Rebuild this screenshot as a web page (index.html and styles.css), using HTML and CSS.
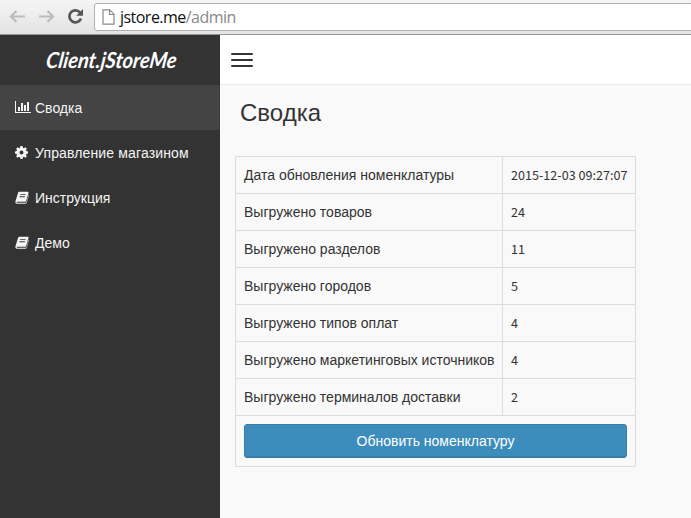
FILE: index.html
```html
<!DOCTYPE html>
<html lang="ru">
<head>
<meta charset="utf-8">
<title>Сводка</title>
<link rel="stylesheet" href="styles.css">
</head>
<body>
<svg class="defs" width="0" height="0" aria-hidden="true">
  <symbol id="book" viewBox="0 0 14 13"><path fill-rule="evenodd" d="M4.600.7h8.100c.7 0 1 .5.8 1.200l-2.400 8c-.2.6-.6.9-1.200.9H2.200c-.7 0-.8.7-.1.9h8.400c.5 0 .8-.2 1-.8l2.300-7.500.2.8-2.200 7.300c-.2.8-.8 1.200-1.500 1.200H2C.7 12.700 0 11.300.5 10.200L3.100 1.700C3.300 1 3.900.7 4.600.7zM5.300 3.200l-.3.9h5.400l.3-.9zM4.600 5.300l-.3.9h5.400l.3-.9z"/></symbol>
</svg>
<header class="browser">
  <svg class="nav-icons" width="94" height="34" viewBox="0 0 94 34" fill="none">
    <path d="M11 16.500h14M16.500 11l-5.500 5.500 5.500 5.500M39 16.500h14M47.500 11l5.500 5.500-5.500 5.500" stroke="#bcbcbc" stroke-width="2.200"/>
    <path d="M80.300 12.800A6 6 0 1 0 81 18.500" stroke="#565656" stroke-width="2.700"/>
    <path d="M83 9v6.800h-6.800z" fill="#565656"/>
  </svg>
  <div class="address">
    <svg width="13" height="16" viewBox="0 0 13 16"><path d="M1 .8h6.700L12 5.200v10H1zM7.500.8v4.700H12" fill="#fff" stroke="#8a8a8a" stroke-width="1.200"/></svg>
    <span class="url">jstore.me<span class="path">/admin</span></span>
  </div>
</header>
<div class="app">
  <aside class="sidebar">
    <a class="logo"><span>Client.jStoreMe</span></a>
    <nav>
      <a class="item active"><svg width="16" height="13" viewBox="0 0 16 13"><path d="M0 0h1v11h15v1H0zM3 6h2v4H3zM6 2h2v8H6zM9 4h2v6H9zM12 1h2v9h-2z"/></svg><span class="t1">Сводка</span></a>
      <a class="item"><svg width="13" height="13" viewBox="0 0 12 12"><path fill-rule="evenodd" d="M5 0h2l.3 1.600.9.4L9.600 1.100 11 2.500l-.9 1.300.4.900 1.500.3v2l-1.500.3-.4.900.9 1.300L9.600 10.900l-1.400-.9-.9.400L7 12H5l-.3-1.600-.9-.4-1.400.9L1 9.500l.9-1.300-.4-.9L0 7V5l1.500-.3.400-.9L1 2.500l1.400-1.400 1.400.9.900-.4zM6 4.200a1.800 1.800 0 1 0 0 3.600 1.800 1.800 0 0 0 0-3.600z"/></svg><span class="t2">Управление магазином</span></a>
      <a class="item"><svg width="14" height="13"><use href="#book"/></svg><span>Инструкция</span></a>
      <a class="item"><svg width="14" height="13"><use href="#book"/></svg><span>Демо</span></a>
    </nav>
  </aside>
  <main>
    <div class="topbar"><div class="burger"><i></i><i></i><i></i></div></div>
    <h1>Сводка</h1>
    <table>
      <tr><td>Дата обновления номенклатуры</td><td class="num">2015-12-03 09:27:07</td></tr>
      <tr><td>Выгружено товаров</td><td class="num">24</td></tr>
      <tr><td>Выгружено разделов</td><td class="num">11</td></tr>
      <tr><td>Выгружено городов</td><td class="num">5</td></tr>
      <tr><td>Выгружено типов оплат</td><td class="num">4</td></tr>
      <tr><td>Выгружено маркетинговых источников</td><td class="num">4</td></tr>
      <tr><td>Выгружено терминалов доставки</td><td class="num">2</td></tr>
      <tr><td colspan="2" class="action"><button>Обновить номенклатуру</button></td></tr>
    </table>
  </main>
</div>
</body>
</html>
```
FILE: styles.css
```css
* { box-sizing: border-box; }
body { margin: 0; height: 518px; overflow: hidden; font: 14px/20px "Liberation Sans", Arial, sans-serif; color: #333; background: #f9f9f9; }
.defs { display: block; }
.browser { height: 35px; display: flex; background: linear-gradient(#f5f5f5, #e3e3e3); border-bottom: 1px solid #959595; }
.nav-icons { flex: none; }
.address { flex: 1; height: 28px; margin: 3px -6px 0 0; padding-left: 7px; display: flex; align-items: center; background: #fff; border: 1px solid #b0b0b0; border-radius: 3px; }
.url { margin-left: 5px; font: 16px/24px "Open Sans", sans-serif; color: #111; letter-spacing: -.53px; white-space: nowrap; }
.path { color: #888; }
.app { display: flex; height: 483px; }
.sidebar { width: 220px; flex: none; background: #333; }
.logo { height: 50px; display: flex; align-items: center; justify-content: center; color: #fff; font: italic 700 22px/50px Lato, sans-serif; white-space: nowrap; }
.logo span { display: block; transform: translateX(2px) skewX(-8deg) scaleX(.91); }
.item { height: 45px; display: flex; align-items: center; padding-left: 15px; color: #f5f5f5; }
.item.active { background: #444; border-right: 1px solid #3b3b3b; }
.item svg { fill: #f5f5f5; flex: none; }
.item span { white-space: nowrap; margin-left: 6px; }
.item .t1 { margin-left: 4px; }
.item .t2 { margin-left: 7px; letter-spacing: .14px; }
main { flex: 1; min-width: 0; }
.topbar { height: 50px; background: #fff; border-bottom: 1px solid #ececec; padding: 18px 11px; }
.burger { width: 22px; display: flex; flex-direction: column; gap: 4px; }
.burger i { height: 2px; background: #333; border-radius: 1px; }
h1 { margin: 15px 0 0 20px; font-size: 24px; line-height: 26px; font-weight: 400; }
table { margin: 30px 0 0 15px; width: 401px; border-collapse: collapse; table-layout: fixed; }
td { height: 37px; padding: 0 8px; border: 1px solid #ddd; white-space: nowrap; }
td:first-child { width: 267px; }
.num { font: 12.600px/20px "Noto Sans CJK SC", sans-serif; }
td.action { height: 51px; }
button { display: block; width: 383px; height: 34px; padding: 0; border: 1px solid #367fa9; border-radius: 3px; background: #3c8dbc; box-shadow: inset 0 -1px 0 #367fa9; color: #fff; font: 14px/20px "Liberation Sans", Arial, sans-serif; }
```
